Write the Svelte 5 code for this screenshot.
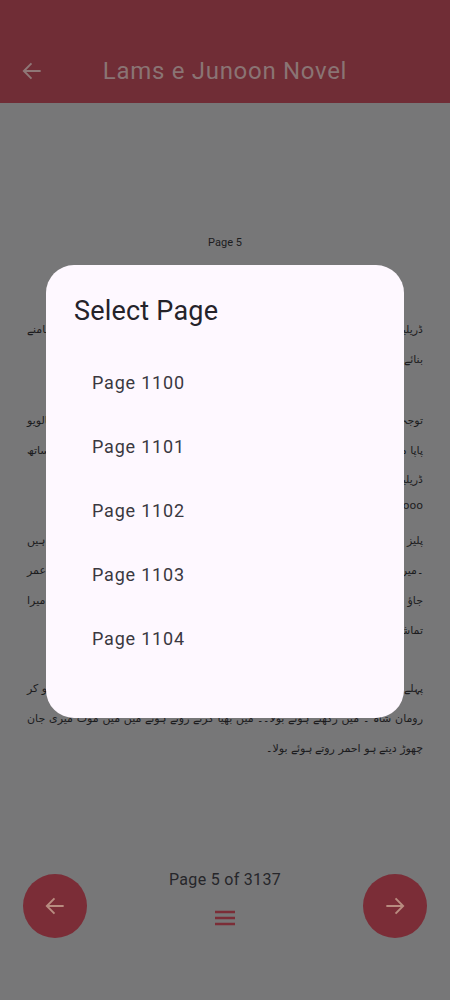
<script>
  let pages = [1100, 1101, 1102, 1103, 1104];

  // scanned page behind the dialog: only the line ends that show beside it
  let paragraphs = [
    { gap: 'g65', lines: [['ڈریلیز', 'سامنے'], ['بنائے', '']] },
    { gap: 'g31', lines: [['توجہ', 'بالویو'], ['پاپا میں', 'ساتھ']] },
    { gap: 'gm1', lines: [['ڈریلیز', '']] },
    { gap: 'gm4', lines: [['ooo', '']] },
    { gap: 'g5', lines: [['پلیز', 'ہیں'], ['۔میرے', 'اس عمر'], ['جاؤ', 'میرا'], ['تماشہ', '']] },
    { gap: 'g28', lines: [['پہلے', 'تو کر']] }
  ];
</script>

<div class="screen">
  <header class="appbar">
    <svg class="back" viewBox="0 0 24 24" width="26" height="26">
      <path d="M20 12H4.5M11.5 5l-7 7 7 7" />
    </svg>
    <h1>Lams e Junoon Novel</h1>
  </header>

  <main class="reader">
    <div class="page-label">Page 5</div>
    {#each paragraphs as p}
      <div class="para {p.gap}">
        {#each p.lines as line}
          <div class="ends" dir="rtl">
            <span>{line[0]}</span>
            <span>{line[1]}</span>
          </div>
        {/each}
      </div>
    {/each}
    <p class="line full" dir="rtl">رومان شاہ ۔ میں رکھتے ہوئے بولا۔۔ میں بھیا کرتے روتے ہوئے میں میں موت میری جان</p>
    <p class="line" dir="rtl">چھوڑ دیتے ہو احمر روتے ہوئے بولا۔</p>
  </main>

  <footer class="bottom">
    <button class="round" aria-label="Previous page">
      <svg viewBox="0 0 24 24" width="26" height="26"><path d="M20 12H4.5M11.5 5l-7 7 7 7" /></svg>
    </button>
    <div class="middle">
      <span class="count">Page 5 of 3137</span>
      <svg class="menu" viewBox="0 0 24 16" width="24" height="16"><path d="M2 2h20M2 8h20M2 14h20" /></svg>
    </div>
    <button class="round" aria-label="Next page">
      <svg viewBox="0 0 24 24" width="26" height="26"><path d="M4 12h15.5M12.5 5l7 7-7 7" /></svg>
    </button>
  </footer>

  <div class="dialog" role="dialog">
    <h2>Select Page</h2>
    <ul>
      {#each pages as n}
        <li>Page {n}</li>
      {/each}
    </ul>
  </div>
</div>

<style>
  :global(body) {
    background: #777778;
  }

  .screen {
    position: relative;
    width: 450px;
    height: 1000px;
    overflow: hidden;
    display: flex;
    flex-direction: column;
    background: #777778;
    font-family: Roboto, "Noto Sans", sans-serif;
  }

  .appbar {
    height: 103px;
    flex: none;
    box-sizing: border-box;
    padding-top: 38px;
    display: flex;
    align-items: center;
    position: relative;
    background: #702d36;
  }

  .back {
    margin-left: 19px;
  }

  .back path {
    fill: none;
    stroke: #8f7777;
    stroke-width: 1.8;
  }

  h1 {
    position: absolute;
    left: 0;
    right: 0;
    margin: 0;
    text-align: center;
    font-size: 24px;
    font-weight: 400;
    letter-spacing: 0.7px;
    color: #8a7474;
  }

  .reader {
    flex: 1;
    padding: 133px 27px 0;
  }

  .page-label {
    text-align: center;
    font-size: 11px;
    line-height: 14px;
    color: #1c1c1e;
  }

  .g65 { margin-top: 65px; }
  .g31 { margin-top: 31px; }
  .gm1 { margin-top: -1px; }
  .gm4 { margin-top: -4px; }
  .g5 { margin-top: 5px; }
  .g28 { margin-top: 28px; }

  .ends,
  .line {
    margin: 0;
    height: 30px;
    line-height: 30px;
    font-family: "DejaVu Sans", sans-serif;
    font-size: 11px;
    color: #1c1c1e;
  }

  .ends {
    display: flex;
    justify-content: space-between;
  }

  .line.full {
    text-align: justify;
    text-align-last: justify;
  }

  .bottom {
    flex: none;
    height: 126px;
    padding: 0 23px;
    display: flex;
    justify-content: space-between;
    align-items: flex-start;
  }

  .round {
    width: 64px;
    height: 64px;
    padding: 0;
    border: none;
    border-radius: 50%;
    background: #7b2d37;
    display: flex;
    align-items: center;
    justify-content: center;
  }

  .round path {
    fill: none;
    stroke: #b88c80;
    stroke-width: 1.8;
  }

  .middle {
    margin-top: -5px;
    display: flex;
    flex-direction: column;
    align-items: center;
    gap: 19px;
  }

  .count {
    font-size: 16px;
    line-height: 22px;
    letter-spacing: 0.3px;
    color: #26262a;
  }

  .menu path {
    fill: none;
    stroke: #7b2d37;
    stroke-width: 2.4;
  }

  .dialog {
    position: absolute;
    left: 46px;
    top: 265px;
    width: 358px;
    height: 453px;
    box-sizing: border-box;
    padding: 28px;
    border-radius: 28px;
    background: #fef8ff;
  }

  h2 {
    margin: 0;
    font-size: 27px;
    line-height: 36px;
    font-weight: 400;
    letter-spacing: 0.2px;
    color: #25232a;
  }

  ul {
    list-style: none;
    margin: 22px 0 0;
    padding: 0 0 0 18px;
  }

  li {
    height: 64px;
    line-height: 64px;
    font-size: 18px;
    letter-spacing: 0.8px;
    color: #3a383f;
  }
</style>
